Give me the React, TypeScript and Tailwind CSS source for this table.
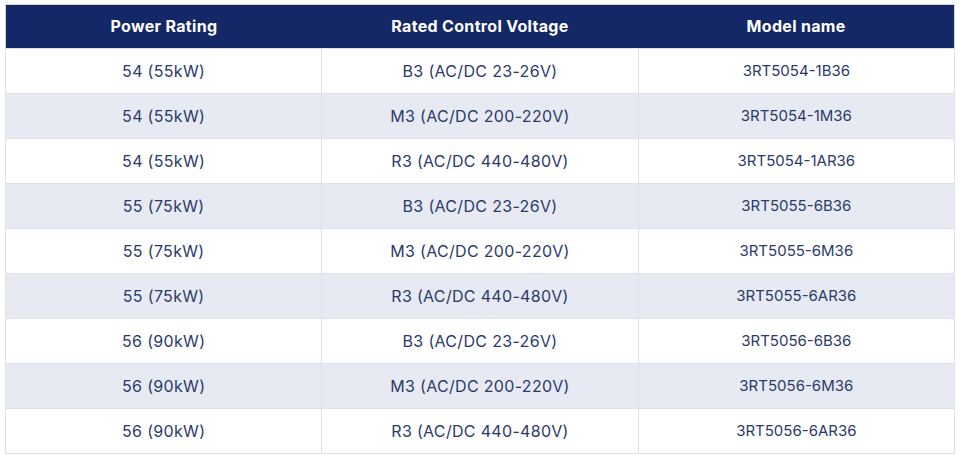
const ROWS: [string, string, string][] = [
  ["54 (55kW)", "B3 (AC/DC 23-26V)", "3RT5054-1B36"],
  ["54 (55kW)", "M3 (AC/DC 200-220V)", "3RT5054-1M36"],
  ["54 (55kW)", "R3 (AC/DC 440-480V)", "3RT5054-1AR36"],
  ["55 (75kW)", "B3 (AC/DC 23-26V)", "3RT5055-6B36"],
  ["55 (75kW)", "M3 (AC/DC 200-220V)", "3RT5055-6M36"],
  ["55 (75kW)", "R3 (AC/DC 440-480V)", "3RT5055-6AR36"],
  ["56 (90kW)", "B3 (AC/DC 23-26V)", "3RT5056-6B36"],
  ["56 (90kW)", "M3 (AC/DC 200-220V)", "3RT5056-6M36"],
  ["56 (90kW)", "R3 (AC/DC 440-480V)", "3RT5056-6AR36"],
];

const HEAD = ["Power Rating", "Rated Control Voltage", "Model name"];

export default function App() {
  return (
    <div className="h-[460px] w-[961px] bg-white pl-[5px] pt-[4px] font-['Inter','Noto_Sans',sans-serif]">
      <table className="w-[950px] table-fixed border-collapse border border-[#d5d7dc]">
        <thead>
          <tr className="h-[44px] bg-[#142767]">
            {HEAD.map((h) => (
              <th
                key={h}
                className="pb-[2px] text-center text-[16px] font-bold tracking-[0.02em] text-white"
              >
                {h}
              </th>
            ))}
          </tr>
        </thead>
        <tbody>
          {ROWS.map((r, i) => (
            <tr
              key={i}
              className={i % 2 === 1 ? "h-[45px] bg-[#e7eaf2]" : "h-[45px] bg-white"}
            >
              {r.map((c, j) => (
                <td
                  key={j}
                  className={
                    j === 2
                      ? "border border-[#dfe1e6] text-center text-[15px] font-normal text-[#2b3a6b]"
                      : "border border-[#dfe1e6] text-center text-[16px] font-normal tracking-[0.02em] text-[#2b3a6b]"
                  }
                >
                  {c}
                </td>
              ))}
            </tr>
          ))}
        </tbody>
      </table>
    </div>
  );
}
